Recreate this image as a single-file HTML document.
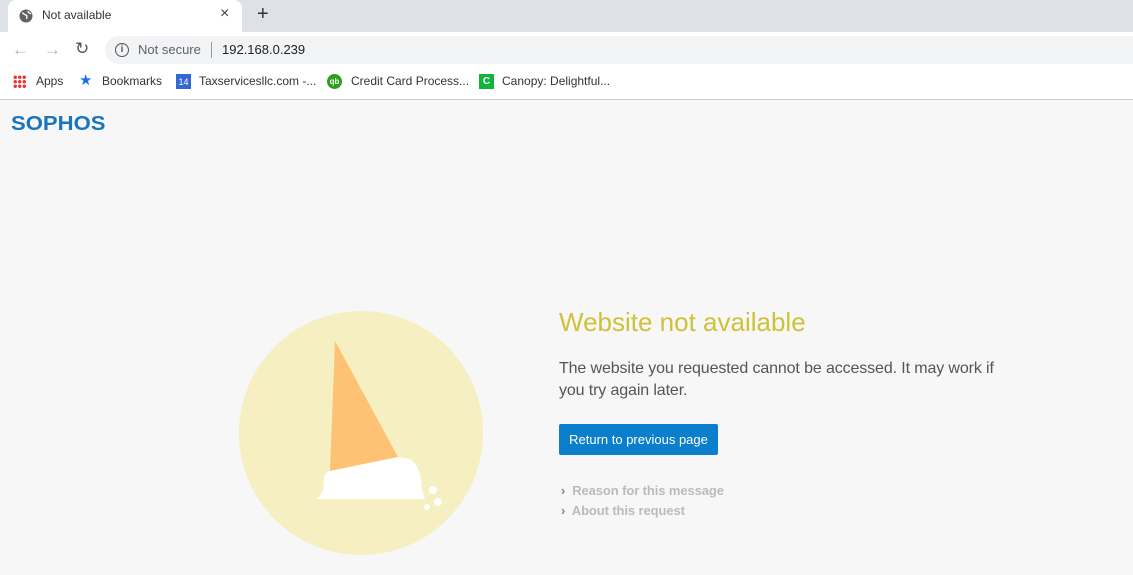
<!DOCTYPE html>
<html><head><meta charset="utf-8"><style>
*{margin:0;padding:0;box-sizing:border-box}
body{width:1133px;height:575px;overflow:hidden;background:#f7f7f7;font-family:"Liberation Sans",sans-serif;position:relative}
.abs{position:absolute;white-space:nowrap}
</style></head><body>
<div class="abs" style="left:0;top:0;width:1133px;height:32px;background:#dee1e6"></div>
<div class="abs" style="left:8px;top:0;width:234px;height:34px;background:#fff;border-radius:8px 8px 0 0"></div>
<svg class="abs" style="left:19px;top:9px" width="14" height="14" viewBox="0 0 14 14"><circle cx="7" cy="7" r="6.5" fill="#5f6368"/><path d="M3 4c2 0 2 2 4 2s0 3 1 4M9 2c0 2 2 2 3 3" stroke="#fff" stroke-width="1.3" fill="none"/></svg>
<div class="abs" style="left:42px;top:8px;font-size:12px;color:#333">Not available</div>
<div class="abs" style="left:220px;top:5px;font-size:16px;color:#444">×</div>
<div class="abs" style="left:257px;top:3px;font-size:20px;color:#333">+</div>
<div class="abs" style="left:0;top:32px;width:1133px;height:36px;background:#fff"></div>
<div class="abs" style="left:12px;top:40px;font-size:17px;color:#b0b0b0">←</div>
<div class="abs" style="left:44px;top:40px;font-size:17px;color:#b0b0b0">→</div>
<div class="abs" style="left:75px;top:39px;font-size:17px;color:#555">↻</div>
<div class="abs" style="left:105px;top:36px;width:1040px;height:28px;background:#f1f3f4;border-radius:14px"></div>
<div class="abs" style="left:115px;top:43px;width:14px;height:14px;border:1.5px solid #555;border-radius:50%;font-size:10px;text-align:center;line-height:11px;color:#555;font-weight:bold">i</div>
<div class="abs" style="left:138px;top:42px;font-size:13px;color:#5f6368">Not secure</div>
<div class="abs" style="left:211px;top:42px;width:1px;height:16px;background:#999"></div>
<div class="abs" style="left:222px;top:42px;font-size:13px;color:#222">192.168.0.239</div>
<div class="abs" style="left:0;top:68px;width:1133px;height:32px;background:#fff;border-bottom:1px solid #ccc"></div>
<div class="abs" style="left:13px;top:75px;width:13px;height:13px;background:radial-gradient(circle,#e33 1.5px,transparent 2px) 0 0/4.5px 4.5px"></div>
<div class="abs" style="left:36px;top:74px;font-size:12px;color:#333">Apps</div>
<div class="abs" style="left:79px;top:71px;font-size:15px;color:#1a73e8">★</div>
<div class="abs" style="left:102px;top:74px;font-size:12px;color:#333">Bookmarks</div>
<div class="abs" style="left:176px;top:74px;width:15px;height:15px;background:#3367d6;color:#fff;font-size:9px;text-align:center;line-height:16px">14</div>
<div class="abs" style="left:199px;top:74px;font-size:12px;color:#333">Taxservicesllc.com -...</div>
<div class="abs" style="left:327px;top:74px;width:15px;height:15px;background:#2ca01c;border-radius:50%;color:#fff;font-size:8px;text-align:center;line-height:15px;font-weight:bold">qb</div>
<div class="abs" style="left:351px;top:74px;font-size:12px;color:#333">Credit Card Process...</div>
<div class="abs" style="left:479px;top:74px;width:15px;height:15px;background:#12b53b;color:#fff;font-size:10px;text-align:center;line-height:15px;font-weight:bold">C</div>
<div class="abs" style="left:502px;top:74px;font-size:12px;color:#333">Canopy: Delightful...</div>
<div class="abs" style="left:11px;top:111px;font-size:23px;font-weight:bold;color:#1a75bb;letter-spacing:0px;transform-origin:0 0;transform:scale(0.96,0.9)">SOPHOS</div>
<svg class="abs" style="left:0;top:0" width="1133" height="575"><circle cx="361" cy="433" r="122" fill="#f5efc1"/><polygon points="335,341 330,471 398,457" fill="#fdc274"/><path d="M330 471 L398 457 L410 459 Q418 464 421 478 L422 490 L425 499 L317 499 L323 491 L324 478 Q325 472 330 471Z" fill="#fff"/><circle cx="433" cy="490" r="4" fill="#fff"/><circle cx="438" cy="502" r="4" fill="#fff"/><circle cx="427" cy="507" r="3" fill="#fff"/></svg>
<div class="abs" style="left:559px;top:307px;font-size:26px;color:#cfc13a">Website not available</div>
<div class="abs" style="left:559px;top:358px;font-size:16px;color:#555;line-height:22px;letter-spacing:-0.12px">The website you requested cannot be accessed. It may work if<br>you try again later.</div>
<div class="abs" style="left:559px;top:424px;width:159px;height:31px;background:#0b7fcc;border-radius:2px;color:#fff;font-size:13px;text-align:center;line-height:31px">Return to previous page</div>
<div class="abs" style="left:561px;top:481px;font-size:13px;font-weight:bold;color:#bbb;line-height:20px;letter-spacing:-0.1px"><span style="color:#888;font-size:13px">›</span>&nbsp; Reason for this message<br><span style="color:#888;font-size:13px">›</span>&nbsp; About this request</div>
</body></html>
